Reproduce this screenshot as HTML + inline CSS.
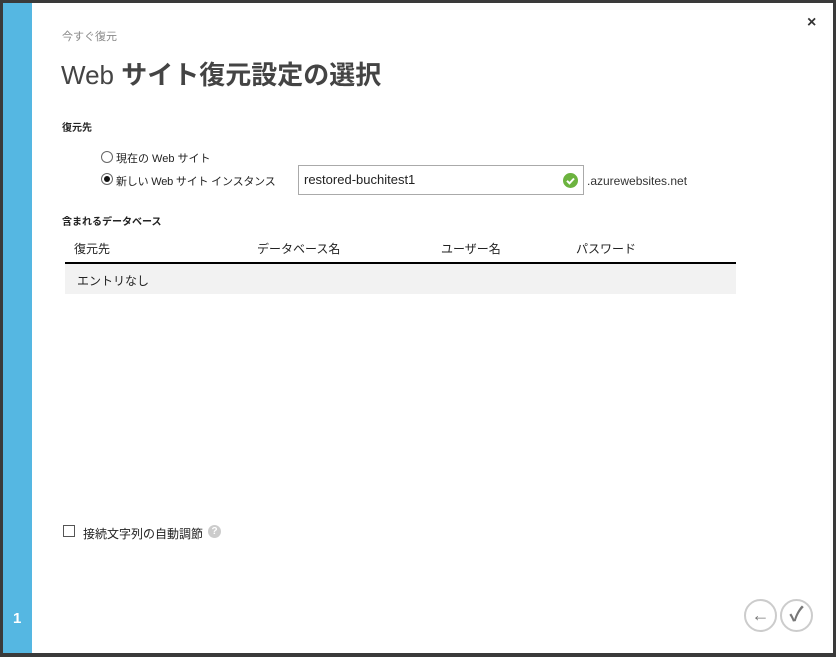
<!DOCTYPE html>
<html><head><meta charset="utf-8"><style>
*{margin:0;padding:0;box-sizing:border-box}
body{width:836px;height:657px;background:#3a3a3a;position:relative;overflow:hidden;font-family:"Liberation Sans","Noto Sans CJK JP",sans-serif;color:#222}
#dlg{position:absolute;left:3px;top:3px;width:830px;height:650px;background:#fff}
#bar{position:absolute;left:0;top:0;width:29px;height:650px;background:#55b7e2}
#num{position:absolute;left:10px;top:607px;color:#fff;font-weight:bold;font-size:15px}
.a{position:absolute;white-space:nowrap}
.rad{position:absolute;width:12px;height:12px;border:1px solid #666;border-radius:50%;background:#fff}
.rad.on::after{content:"";position:absolute;left:2px;top:2px;width:6px;height:6px;border-radius:50%;background:#111}
.circ{position:absolute;width:33px;height:33px;border:2px solid #ccc;border-radius:50%;color:#777;font-size:18px;text-align:center;line-height:29px;font-weight:bold}
</style></head><body>
<div id="dlg">
<div id="bar"></div><div id="num">1</div>
<div class="a" style="left:804px;top:11px;font-size:16px;font-weight:bold;color:#333">×</div>
<div class="a" style="left:59px;top:25px;font-size:11px;color:#888">今すぐ復元</div>
<div class="a" style="left:58px;top:52px;font-size:26px;color:#444">Web <b>サイト復元設定の選択</b></div>
<div class="a" style="left:59px;top:116px;font-size:10px;font-weight:bold">復元先</div>
<div class="rad" style="left:98px;top:148px"></div>
<div class="a" style="left:113px;top:147px;font-size:11px">現在の Web サイト</div>
<div class="rad on" style="left:98px;top:170px"></div>
<div class="a" style="left:113px;top:170px;font-size:11px;letter-spacing:-0.2px">新しい Web サイト インスタンス</div>
<div class="a" style="left:295px;top:162px;width:286px;height:30px;border:1px solid #aaa;padding:6px 5px;font-size:13px">restored-buchitest1
<svg style="position:absolute;right:5px;top:7px" width="15" height="15" viewBox="0 0 15 15"><circle cx="7.5" cy="7.5" r="7.5" fill="#6cb33f"/><path d="M4 7.8l2.5 2.5L11 5.5" stroke="#fff" stroke-width="2" fill="none"/></svg></div>
<div class="a" style="left:584px;top:171px;font-size:12px;color:#333">.azurewebsites.net</div>
<div class="a" style="left:59px;top:210px;font-size:10px;font-weight:bold">含まれるデータベース</div>
<div class="a" style="left:71px;top:237px;font-size:12px">復元先</div>
<div class="a" style="left:254px;top:237px;font-size:12px">データベース名</div>
<div class="a" style="left:438px;top:237px;font-size:12px">ユーザー名</div>
<div class="a" style="left:573px;top:237px;font-size:12px">パスワード</div>
<div class="a" style="left:62px;top:259px;width:671px;height:2px;background:#000"></div>
<div class="a" style="left:62px;top:261px;width:671px;height:30px;background:#f2f2f2;padding:8px 12px;font-size:12px">エントリなし</div>
<div class="a" style="left:60px;top:522px;width:12px;height:12px;border:1px solid #555"></div>
<div class="a" style="left:80px;top:522px;font-size:12px">接続文字列の自動調節</div>
<div class="a" style="left:205px;top:522px;width:13px;height:13px;border-radius:50%;background:#ccc;color:#fff;font-size:10px;font-weight:bold;text-align:center;line-height:13px">?</div>
<div class="circ" style="left:741px;top:596px">←</div>
<div class="circ" style="left:777px;top:596px;font-size:20px">✓</div>
</div>
</body></html>
